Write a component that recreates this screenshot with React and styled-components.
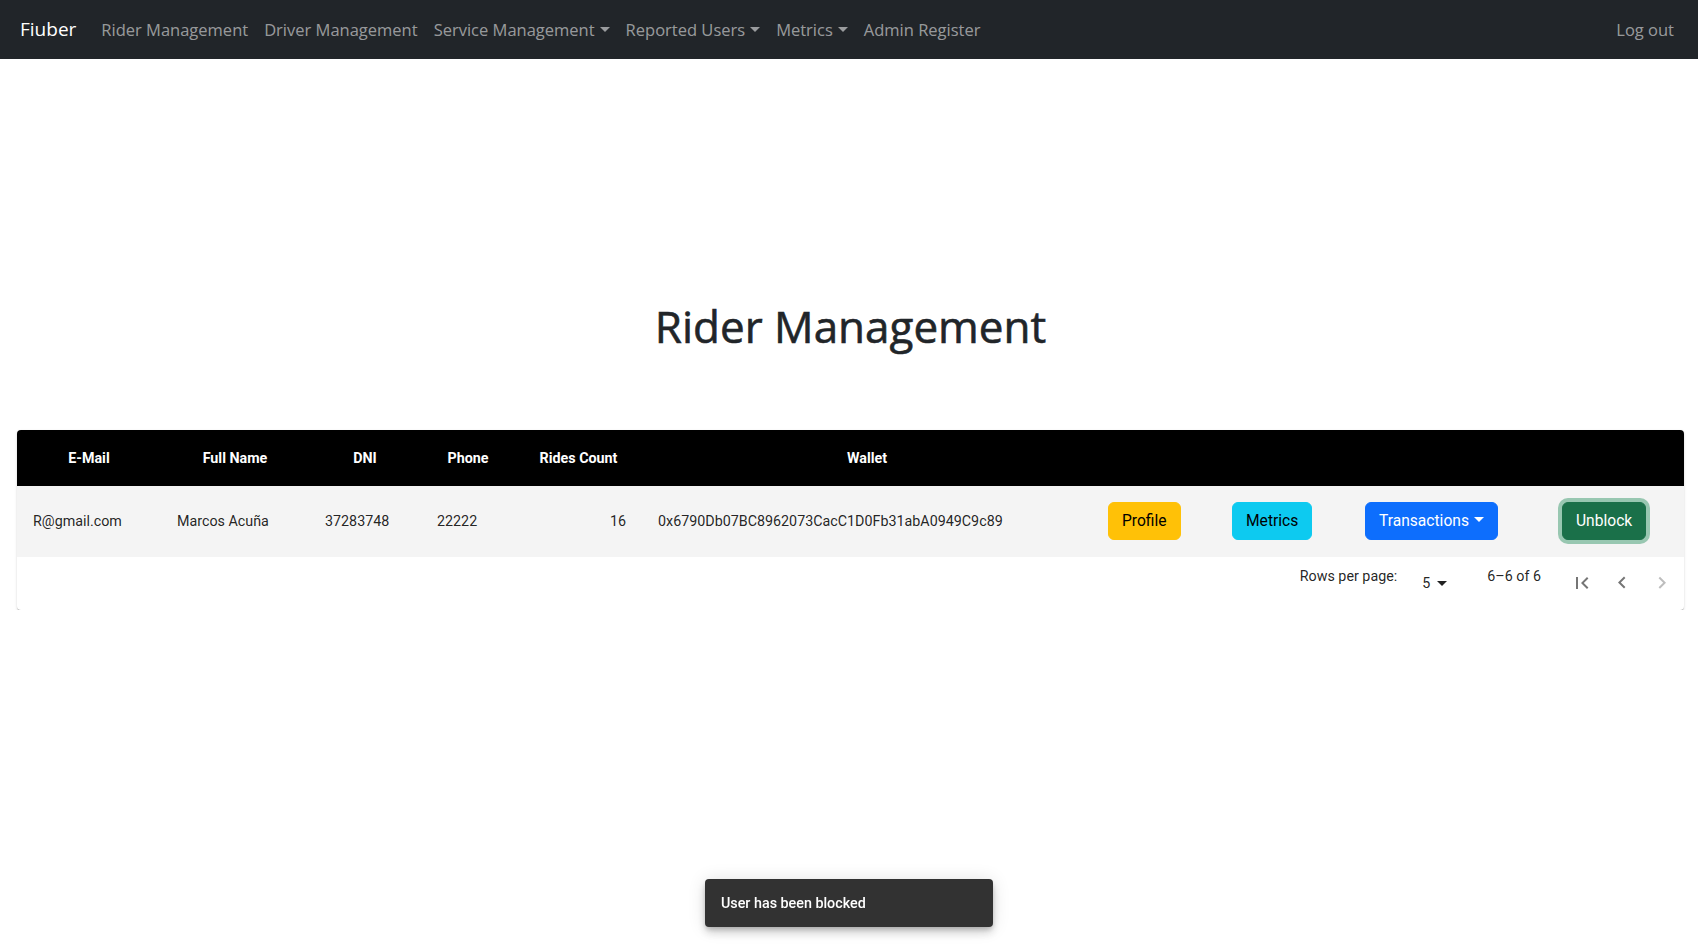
import React from "react";
import styled, { createGlobalStyle } from "styled-components";

const GlobalStyle = createGlobalStyle`
  html, body {
    margin: 0;
    padding: 0;
    background: #ffffff;
  }
  body {
    font-family: "Open Sans", "Noto Sans", sans-serif;
    color: #212529;
  }
  * {
    box-sizing: border-box;
  }
`;

const COLUMNS = "144px 148px 112px 94px 127px 450px 124px 133px 197px 138px";

const Navbar = styled.nav`
  height: 59px;
  background-color: #212529;
  display: flex;
  align-items: center;
  padding: 0 16px 0 20px;
`;
const Brand = styled.a`
  font-size: 19px;
  color: #ffffff;
  margin-right: 17px;
  padding-bottom: 2px;
`;
const NavLinks = styled.div`
  display: flex;
  align-items: center;
  flex: 1;
`;
const NavLink = styled.a`
  padding: 0 8px;
  font-size: 16.5px;
  color: rgba(255, 255, 255, 0.55);
  cursor: pointer;
  white-space: nowrap;

  ${({ $dropdown }) =>
    $dropdown &&
    `
    &::after {
      content: "";
      display: inline-block;
      margin-left: 5px;
      vertical-align: 4px;
      border-top: 5px solid;
      border-left: 5px solid transparent;
      border-right: 5px solid transparent;
    }
  `}
`;

const Main = styled.main`
  display: flex;
  flex-direction: column;
  padding: 241px 14px 0 17px;
`;
const Title = styled.h1`
  margin: 0;
  text-align: center;
  font-size: 44px;
  font-weight: 500;
  line-height: 1.2;
  color: #212529;
  -webkit-text-stroke: 0.6px #212529;
`;

const TableCard = styled.div`
  margin-top: 77px;
  background: #ffffff;
  border-radius: 4px;
  box-shadow: 0px 2px 1px -1px rgba(0, 0, 0, 0.2),
    0px 1px 1px 0px rgba(0, 0, 0, 0.14), 0px 1px 3px 0px rgba(0, 0, 0, 0.12);
  font-family: Roboto, "Liberation Sans", sans-serif;
`;
const HeadRow = styled.div`
  display: grid;
  grid-template-columns: ${COLUMNS};
  height: 56px;
  background-color: #000000;
  border-radius: 4px 4px 0 0;
`;
const HeadCell = styled.div`
  display: flex;
  align-items: center;
  justify-content: center;
  padding: 0 16px;
  color: #ffffff;
  font-size: 14.3px;
  font-weight: 700;
`;
const BodyRow = styled.div`
  display: grid;
  grid-template-columns: ${COLUMNS};
  height: 71px;
  background-color: #f4f4f4;
`;
const Cell = styled.div`
  display: flex;
  align-items: center;
  justify-content: ${({ $align }) => ($align === "right" ? "flex-end" : "flex-start")};
  padding: 0 16px;
  font-size: 14.3px;
  color: rgba(0, 0, 0, 0.87);
  white-space: nowrap;
`;

const variants = {
  warning: { bg: "#ffc107", color: "#000000" },
  info: { bg: "#0dcaf0", color: "#000000" },
  primary: { bg: "#0d6efd", color: "#ffffff" },
  success: { bg: "#1a7049", color: "#ffffff" },
};

const ActionButton = styled.button`
  font-family: Roboto, "Liberation Sans", sans-serif;
  font-size: 15.6px;
  line-height: 24px;
  padding: 6px 13px;
  border: 1px solid ${({ $variant }) => variants[$variant].bg};
  border-radius: 6px;
  background-color: ${({ $variant }) => variants[$variant].bg};
  color: ${({ $variant }) => variants[$variant].color};
  cursor: pointer;
  box-shadow: ${({ $focus }) => ($focus ? "0 0 0 4px rgba(60, 153, 110, 0.5)" : "none")};

  ${({ $dropdown }) =>
    $dropdown &&
    `
    &::after {
      content: "";
      display: inline-block;
      margin-left: 5px;
      vertical-align: 4px;
      border-top: 5px solid;
      border-left: 5px solid transparent;
      border-right: 5px solid transparent;
    }
  `}
`;

const Pagination = styled.div`
  height: 53px;
  display: flex;
  align-items: center;
  justify-content: flex-end;
  padding-right: 2px;
  font-size: 14.3px;
  color: rgba(0, 0, 0, 0.87);
`;
const PageText = styled.p`
  margin: 0 0 14px 0;
`;
const RowsSelect = styled.div`
  display: flex;
  align-items: center;
  margin: 0 33px 0 25px;
`;
const PageActions = styled.div`
  display: flex;
  align-items: center;
  margin-left: 21px;
`;
const IconButton = styled.button`
  width: 40px;
  height: 40px;
  padding: 8px;
  border: none;
  background: transparent;
  display: flex;
  align-items: center;
  justify-content: center;
  color: ${({ disabled }) => (disabled ? "rgba(0, 0, 0, 0.26)" : "rgba(0, 0, 0, 0.54)")};
  cursor: pointer;
`;

const Snackbar = styled.div`
  position: fixed;
  left: 50%;
  bottom: 19px;
  transform: translateX(-50%);
  width: 288px;
  height: 48px;
  display: flex;
  align-items: center;
  padding: 0 16px;
  background-color: #323232;
  border-radius: 4px;
  color: #ffffff;
  font-family: Roboto, "Liberation Sans", sans-serif;
  font-size: 14.3px;
  font-weight: 500;
  box-shadow: 0px 3px 5px -1px rgba(0, 0, 0, 0.2),
    0px 6px 10px 0px rgba(0, 0, 0, 0.14), 0px 1px 18px 0px rgba(0, 0, 0, 0.12);
`;

const Icon = ({ d }) => (
  <svg width="24" height="24" viewBox="0 0 24 24" fill="currentColor">
    <path d={d} />
  </svg>
);

const headers = ["E-Mail", "Full Name", "DNI", "Phone", "Rides Count", "Wallet", "", "", "", ""];

const rider = {
  email: "R@gmail.com",
  name: "Marcos Acuña",
  dni: "37283748",
  phone: "22222",
  rides: 16,
  wallet: "0x6790Db07BC8962073CacC1D0Fb31abA0949C9c89",
};

const App = () => {
  return (
    <>
      <GlobalStyle />
      <Navbar>
        <Brand>Fiuber</Brand>
        <NavLinks>
          <NavLink>Rider Management</NavLink>
          <NavLink>Driver Management</NavLink>
          <NavLink $dropdown>Service Management</NavLink>
          <NavLink $dropdown>Reported Users</NavLink>
          <NavLink $dropdown>Metrics</NavLink>
          <NavLink>Admin Register</NavLink>
        </NavLinks>
        <NavLink>Log out</NavLink>
      </Navbar>

      <Main>
        <Title>Rider Management</Title>
        <TableCard>
          <HeadRow>
            {headers.map((h, i) => (
              <HeadCell key={i}>{h}</HeadCell>
            ))}
          </HeadRow>
          <BodyRow>
            <Cell>{rider.email}</Cell>
            <Cell>{rider.name}</Cell>
            <Cell>{rider.dni}</Cell>
            <Cell>{rider.phone}</Cell>
            <Cell $align="right">{rider.rides}</Cell>
            <Cell>{rider.wallet}</Cell>
            <Cell>
              <ActionButton $variant="warning">Profile</ActionButton>
            </Cell>
            <Cell>
              <ActionButton $variant="info">Metrics</ActionButton>
            </Cell>
            <Cell>
              <ActionButton $variant="primary" $dropdown>
                Transactions
              </ActionButton>
            </Cell>
            <Cell>
              <ActionButton $variant="success" $focus>
                Unblock
              </ActionButton>
            </Cell>
          </BodyRow>
          <Pagination>
            <PageText>Rows per page:</PageText>
            <RowsSelect>
              5
              <Icon d="M7 10l5 5 5-5z" />
            </RowsSelect>
            <PageText>6–6 of 6</PageText>
            <PageActions>
              <IconButton>
                <Icon d="M18.41 16.59L13.82 12l4.59-4.59L17 6l-6 6 6 6zM6 6h2v12H6z" />
              </IconButton>
              <IconButton>
                <Icon d="M15.41 16.09l-4.58-4.59 4.58-4.59L14 5.5l-6 6 6 6z" />
              </IconButton>
              <IconButton disabled>
                <Icon d="M8.59 16.34l4.58-4.59-4.58-4.59L10 5.75l6 6-6 6z" />
              </IconButton>
            </PageActions>
          </Pagination>
        </TableCard>
      </Main>

      <Snackbar>User has been blocked</Snackbar>
    </>
  );
};

export default App;
